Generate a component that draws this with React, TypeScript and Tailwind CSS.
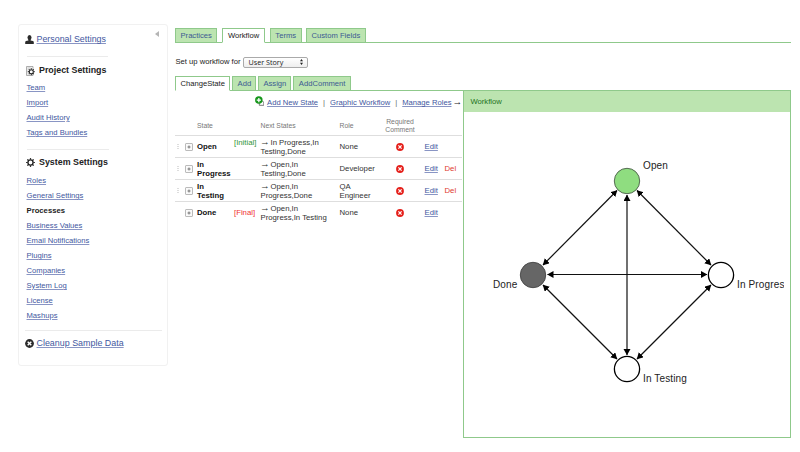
import React from 'react';

const PROJECT = ['Team', 'Import', 'Audit History', 'Tags and Bundles'];
const SYSTEM = ['Roles', 'General Settings', 'Processes', 'Business Values', 'Email Notifications', 'Plugins', 'Companies', 'System Log', 'License', 'Mashups'];

function NavList({ items }: { items: string[] }) {
  return (
    <ul className="flex flex-col">
      {items.map((item) => (
        <li key={item} className="h-[15px] text-[7.65px] leading-[15px]">
          {item === 'Processes' ? (
            <b className="tracking-[0.03px] text-[#222]">{item}</b>
          ) : (
            <a className="text-[#4257a0] underline decoration-[#8995c4]">{item}</a>
          )}
        </li>
      ))}
    </ul>
  );
}

function UserIcon() {
  return (
    <svg width="9" height="9" viewBox="0 0 9 9" fill="#2b2b2b" className="block">
      <ellipse cx="4.500" cy="2.500" rx="2" ry="2.500" />
      <path d="M3.400 4h2.200v1.400L8 6.100q.8.300.8 1.200V9H.2V7.300Q.2 6.400 1 6.100L3.400 5.400z" />
    </svg>
  );
}

function Cog({ cx, cy, r }: { cx: number; cy: number; r: number }) {
  return (
    <g stroke="#222" fill="none">
      <circle cx={cx} cy={cy} r={r * 0.58} strokeWidth={r * 0.3} />
      {[0, 45, 90, 135, 180, 225, 270, 315].map((a) => (
        <path key={a} d={`M${cx} ${cy - r * 0.65}V${cy - r}`} strokeWidth={r * 0.28} transform={`rotate(${a} ${cx} ${cy})`} />
      ))}
    </g>
  );
}

function CrossIcon({ color, size }: { color: string; size: number }) {
  return (
    <svg width={size} height={size} viewBox="0 0 9 9" className="block">
      <circle cx="4.500" cy="4.500" r="4.400" fill={color} />
      <path d="M2.700 2.700l3.600 3.600M6.300 2.700L2.700 6.300" stroke="#fff" strokeWidth="1.400" />
    </svg>
  );
}

function Sidebar() {
  return (
    <aside className="relative mt-6 ml-[17.500px] h-[342px] w-[150px] shrink-0 rounded-[3px] border border-[#f1f1f1] pl-[8px]">
      <svg className="absolute top-[6px] right-[8px]" width="4" height="6" viewBox="0 0 4 6">
        <path d="M4 0v6L0 3z" fill="#b5b5b5" />
      </svg>
      <div className="mt-[9px] flex h-[12px] items-center gap-[3px] text-[8.870px]">
        <span className="-mt-[1px] -ml-[2px]"><UserIcon /></span>
        <a className="text-[#4257a0] underline decoration-[#8995c4]">Personal Settings</a>
      </div>
      <div className="mt-[10px] w-[81px] border-t border-[#ebebeb]" />
      <h2 className="mt-[7px] flex h-[13px] items-center gap-[4px] text-[8.870px] font-bold text-[#222]">
        <svg width="9" height="10" viewBox="0 0 9 10" className="-ml-[1px] mr-[0.500px]">
          <path d="M.5.500h6.500v9H.500z" fill="#f4f4f4" stroke="#999" strokeWidth=".8" />
          <path d="M1.500 2h3M1.500 4h1M1.500 6h1M1.500 8h1" stroke="#aaa" strokeWidth=".6" />
          <circle cx="5.300" cy="5.700" r="2.500" fill="#fff" />
          <Cog cx={5.3} cy={5.7} r={3.5} />
        </svg>
        Project Settings
      </h2>
      <div className="mt-[3px]"><NavList items={PROJECT} /></div>
      <div className="mt-[9px] w-[82px] border-t border-[#ebebeb]" />
      <h2 className="mt-[6px] flex h-[13px] items-center gap-[4px] text-[8.870px] font-bold text-[#222]">
        <svg width="9" height="9" viewBox="0 0 9 9" className="-ml-[1px] mr-[0.500px]"><Cog cx={4.5} cy={4.5} r={4.4} /></svg>
        System Settings
      </h2>
      <div className="mt-[4px]"><NavList items={SYSTEM} /></div>
      <div className="mt-[7px] -ml-[2px] w-[137px] border-t border-[#ebebeb]" />
      <div className="mt-[7px] -ml-[2px] flex h-[12px] items-center gap-[3px] text-[8.920px]">
        <span className="-mt-[1px]"><CrossIcon color="#2b2b2b" size={9} /></span>
        <a className="text-[#4257a0] underline decoration-[#8995c4]">Cleanup Sample Data</a>
      </div>
    </aside>
  );
}

function Tab({ label, width, active = false }: { label: string; width: number; active?: boolean }) {
  return (
    <div
      style={{ width }}
      className={
        'flex h-[15px] shrink-0 items-center justify-center border border-[#8fc98b] text-[7.650px] whitespace-nowrap ' +
        (active ? 'border-b-white bg-white text-[#222]' : 'bg-[#bce4b0] text-[#3d5a92]')
      }
    >
      {label}
    </div>
  );
}

const ROWS = [
  { name: ['Open'], tag: '[Initial]', next: ['In Progress,In', 'Testing,Done'], role: ['None'], del: false, grip: true },
  { name: ['In', 'Progress'], tag: '', next: ['Open,In', 'Testing,Done'], role: ['Developer'], del: true, grip: true },
  { name: ['In', 'Testing'], tag: '', next: ['Open,In', 'Progress,Done'], role: ['QA', 'Engineer'], del: true, grip: true },
  { name: ['Done'], tag: '[Final]', next: ['Open,In', 'Progress,In Testing'], role: ['None'], del: false, grip: false },
];

const COLS = 'grid grid-cols-[9.500px_12px_38px_26px_79px_40px_45px_20px_17px] items-center';

function Arrow() {
  return <span className="-ml-[0.500px] inline-block w-[10.500px] text-[9.500px] leading-[8px]">→</span>;
}

function Lines({ items }: { items: string[] }) {
  return <>{items.map((t) => <span key={t} className="block">{t}</span>)}</>;
}

function StateTable() {
  return (
    <div className="w-[287px]">
      <div className={COLS + ' h-[23px] text-[6.800px] leading-[7.500px] text-[#777]'}>
        <span /><span />
        <span className="mt-[5px] ml-[0.500px]">State</span>
        <span />
        <span className="mt-[5px]">Next States</span>
        <span className="mt-[5px]">Role</span>
        <span className="mt-[4px] ml-[4.500px] w-[32px] text-center">Required Comment</span>
      </div>
      {ROWS.map((r) => (
        <div key={r.name.join(' ')} className={COLS + ' h-[22px] border-t border-[#dedede] text-[7.750px] leading-[9px] text-[#333]'}>
          <span className="ml-[2px] flex flex-col gap-px">
            {r.grip && [0, 1, 2].map((i) => <i key={i} className="h-px w-[2px] bg-[#ddd]" />)}
          </span>
          <span className="flex h-[8px] w-[8px] items-center justify-center rounded-[1px] border border-[#bbb] bg-[#fafafa]">
            <svg width="4" height="4" viewBox="0 0 4 4"><path d="M.5 2h3M2 .5v3" stroke="#777" strokeWidth="1" /></svg>
          </span>
          <b className="ml-[0.500px] text-[#111]"><Lines items={r.name} /></b>
          <span className={r.tag === '[Initial]' ? '-mt-[8px] -ml-[0.500px] text-[#2f9438]' : '-ml-[0.500px] text-[#f03030]'}>{r.tag}</span>
          <span className="whitespace-nowrap">
            <span className="flex h-[9px] items-center"><Arrow />{r.next[0]}</span>
            <span className="block">{r.next[1]}</span>
          </span>
          <span><Lines items={r.role} /></span>
          <span className="ml-[16.500px]"><CrossIcon color="#e5201b" size={8} /></span>
          <a className="text-[#4257a0] underline decoration-[#8995c4]">Edit</a>
          <span className="text-[#e03a30]">{r.del && 'Del'}</span>
        </div>
      ))}
    </div>
  );
}

const EDGES: number[][] = [
  [617, 190.5, 543, 265],
  [637, 190.5, 711, 265],
  [543, 285, 617, 359],
  [711, 285, 637, 359],
  [627, 195, 627, 355],
  [547.5, 274.5, 707, 274.5],
];

function Diagram() {
  return (
    <svg className="block h-[326px] w-[320px] overflow-hidden" viewBox="464 112 320 326">
      <defs>
        <marker id="arrow" markerUnits="userSpaceOnUse" markerWidth="8" markerHeight="8" refX="6" refY="3.500" orient="auto-start-reverse">
          <path d="M0 0L6.300 3.500L0 7z" fill="#000" />
        </marker>
      </defs>
      {EDGES.map(([x1, y1, x2, y2], i) => (
        <line key={i} x1={x1} y1={y1} x2={x2} y2={y2} stroke="#111" strokeWidth="1.200" markerStart="url(#arrow)" markerEnd="url(#arrow)" />
      ))}
      <circle cx="627" cy="181" r="12.700" fill="#8fdd80" stroke="#4b5c48" strokeWidth=".9" />
      <circle cx="533" cy="275" r="12.700" fill="#666" stroke="#444" strokeWidth=".9" />
      <circle cx="721" cy="275" r="12.600" fill="#fff" stroke="#000" strokeWidth="1.300" />
      <circle cx="627" cy="369" r="12.600" fill="#fff" stroke="#000" strokeWidth="1.300" />
      <g fill="#222" className="text-[10px] tracking-[0.140px]">
        <text x="643" y="168.500">Open</text>
        <text x="493" y="287.500">Done</text>
        <text x="737" y="287.500">In Progress</text>
        <text x="643" y="381.500">In Testing</text>
      </g>
    </svg>
  );
}

export default function App() {
  return (
    <div className="flex h-[452px] w-[800px] overflow-hidden bg-white font-['Liberation_Sans',Arial,sans-serif] antialiased">
      <Sidebar />
      <main className="ml-[7.500px] flex w-[616px] shrink-0 flex-col pt-[28px]">
        <div className="flex h-[15px] items-start gap-[4.400px] border-b border-[#8fc98b]">
          <Tab label="Practices" width={42.4} />
          <Tab label="Workflow" width={43.6} active />
          <Tab label="Terms" width={32} />
          <Tab label="Custom Fields" width={59.5} />
        </div>
        <div className="mt-[13px] flex h-[12px] items-center gap-[3px] pl-[0.500px] text-[7.650px] text-[#222]">
          <span>Set up workflow for</span>
          <div className="flex h-[11px] w-[65px] items-center justify-between rounded-[2px] border border-[#aaa] bg-linear-to-b from-white to-[#eee] pr-[4px] pl-[4px] font-['Open_Sans',sans-serif] text-[7.200px]">
            User Story
            <svg width="3" height="6" viewBox="0 0 3 6"><path d="M0 2.300L1.500 0L3 2.300zM0 3.700L1.500 6L3 3.700z" fill="#222" /></svg>
          </div>
        </div>
        <div className="mt-[8px] flex h-[15px] items-start gap-[2px] border-b border-[#8fc98b]">
          <Tab label="ChangeState" width={55.4} active />
          <Tab label="Add" width={24} />
          <Tab label="Assign" width={33} />
          <Tab label="AddComment" width={57.5} />
        </div>
        <div className="flex">
          <section className="w-[288px] shrink-0">
            <div className="flex h-[21px] items-center pt-[3px] pl-[79.500px] text-[7.650px] whitespace-nowrap text-[#4257a0]">
              <svg className="-mt-[4px] mr-[3px]" width="10" height="10" viewBox="0 0 10 10">
                <path d="M4.500 9.500V6.200L6.800 4.500L9.200 6.200v3.300z" fill="#fff" stroke="#555" strokeWidth=".8" />
                <circle cx="4" cy="4" r="3.900" fill="#16961b" />
                <path d="M4 1.800v4.400M1.800 4h4.400" stroke="#fff" strokeWidth="1.300" />
              </svg>
              <a className="underline decoration-[#8995c4]">Add New State</a>
              <span className="mx-[5px] text-[#666]">|</span>
              <a className="underline decoration-[#8995c4]">Graphic Workflow</a>
              <span className="mx-[5px] text-[#666]">|</span>
              <a className="underline decoration-[#8995c4]">Manage Roles</a>
              <span className="ml-[1.500px] text-[#222]"><Arrow /></span>
            </div>
            <StateTable />
          </section>
          <section className="-mt-px h-[348px] w-[328px] border border-[#8fc98b]">
            <h3 className="flex h-[21px] items-center bg-[#bce4b0] pl-[6.500px] text-[7.650px] text-[#1d731d]">Workflow</h3>
            <Diagram />
          </section>
        </div>
      </main>
    </div>
  );
}
